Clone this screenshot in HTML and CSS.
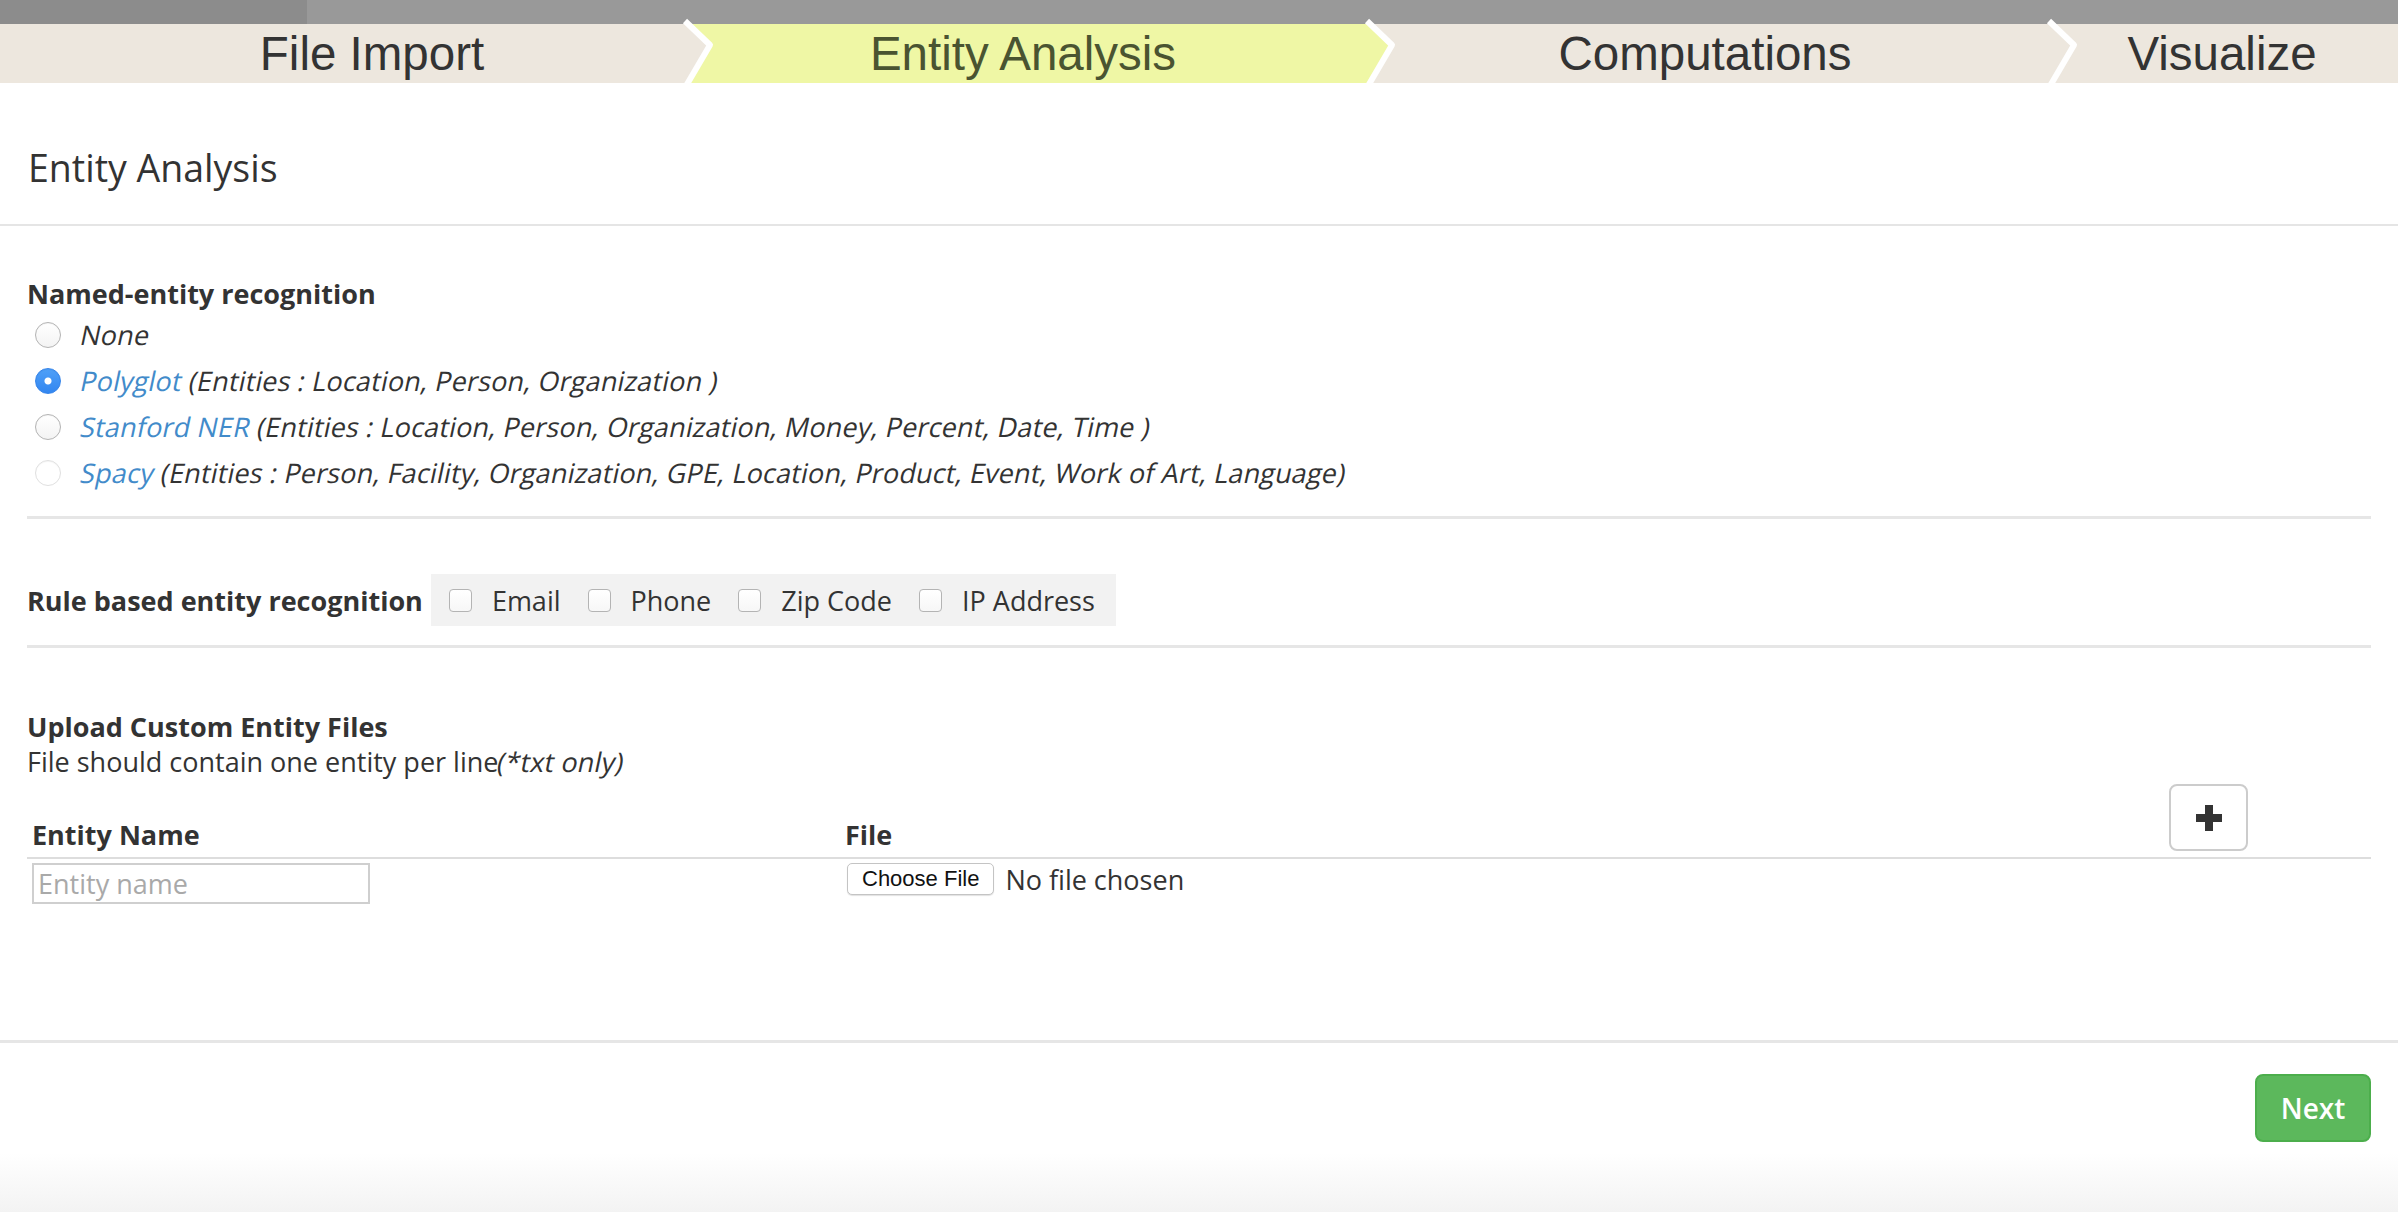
FILE: index.html
```html
<!DOCTYPE html>
<html lang="en">
<head>
<meta charset="utf-8">
<title>Entity Analysis</title>
<link rel="stylesheet" href="styles.css">
</head>
<body>
<div class="progress"><div class="progress-fill"></div></div>
<nav class="steps">
  <div class="step step-first">
    <span>File Import</span>
    <svg class="chev" width="40" height="59" viewBox="0 0 40 59"><polygon class="chev-fill-beige" points="0,0 7,0 32,21 8,59 0,59"/><polyline points="7,-3 32,21 8,62" fill="none" stroke="#fff" stroke-width="6" stroke-linejoin="round"/></svg>
  </div>
  <div class="step step-active">
    <span>Entity Analysis</span>
    <svg class="chev" width="40" height="59" viewBox="0 0 40 59"><polygon class="chev-fill-yellow" points="0,0 7,0 32,21 8,59 0,59"/><polyline points="7,-3 32,21 8,62" fill="none" stroke="#fff" stroke-width="6" stroke-linejoin="round"/></svg>
  </div>
  <div class="step">
    <span>Computations</span>
    <svg class="chev" width="40" height="59" viewBox="0 0 40 59"><polygon class="chev-fill-beige" points="0,0 7,0 32,21 8,59 0,59"/><polyline points="7,-3 32,21 8,62" fill="none" stroke="#fff" stroke-width="6" stroke-linejoin="round"/></svg>
  </div>
  <div class="step step-last">
    <span>Visualize</span>
  </div>
</nav>

<header class="page-title"><h1>Entity Analysis</h1></header>

<main class="panel-body">
  <section class="ner">
    <div class="group-label">Named-entity recognition</div>
    <label class="radio-row"><input type="radio" name="ner"><em class="obl">None</em></label>
    <label class="radio-row"><input type="radio" name="ner" checked><em class="obl"><a class="lnk">Polyglot</a> (Entities : Location, Person, Organization )</em></label>
    <label class="radio-row"><input type="radio" name="ner"><em class="obl"><a class="lnk">Stanford NER</a> (Entities : Location, Person, Organization, Money, Percent, Date, Time )</em></label>
    <label class="radio-row"><input type="radio" name="ner" disabled><em class="obl"><a class="lnk">Spacy</a> (Entities : Person, Facility, Organization, GPE, Location, Product, Event, Work of Art, Language)</em></label>
  </section>

  <hr class="divider">

  <section class="rule-row">
    <div class="rule-label">Rule based entity recognition</div>
    <div class="rule-box">
      <label class="check"><input type="checkbox"><span>Email</span></label>
      <label class="check"><input type="checkbox"><span>Phone</span></label>
      <label class="check"><input type="checkbox"><span>Zip Code</span></label>
      <label class="check"><input type="checkbox"><span>IP Address</span></label>
    </div>
  </section>

  <hr class="divider divider-2">

  <section class="upload">
    <div class="upload-title">Upload Custom Entity Files</div>
    <div class="upload-desc">File should contain one entity per line<em class="obl">(*txt only)</em></div>

    <div class="tbl">
      <div class="tbl-head">
        <div class="th">Entity Name</div>
        <div class="th">File</div>
        <div class="th th-add">
          <button class="btn-add" type="button" aria-label="Add">
            <svg width="26" height="26" viewBox="0 0 26 26"><path d="M9 0h8v9h9v8h-9v9H9v-9H0V9h9z" fill="#333"/></svg>
          </button>
        </div>
      </div>
      <div class="tbl-row">
        <div class="td"><input class="name-input" type="text" placeholder="Entity name"></div>
        <div class="td td-file"><button class="file-btn" type="button">Choose File</button><span class="file-none">No file chosen</span></div>
        <div class="td"></div>
      </div>
    </div>
  </section>
</main>

<footer class="panel-footer">
  <button class="btn-next" type="button">Next</button>
</footer>
</body>
</html>
```

FILE: styles.css
```css
* { box-sizing: border-box; }

body {
  margin: 0;
  font-family: "Open Sans", "Noto Sans", sans-serif;
  font-size: 27px;
  color: #333;
  background: #fff;
}

/* top progress bar */
.progress {
  height: 24px;
  background: #999999;
}
.progress-fill {
  width: 307px;
  height: 100%;
  background: #8c8c8c;
}

/* wizard steps */
.steps {
  display: flex;
  height: 59px;
  background: #ede7de;
}
.step {
  position: relative;
  flex: none;
  width: 682px;
  display: flex;
  align-items: center;
  justify-content: center;
  font-family: "Liberation Sans", Arial, sans-serif;
  font-size: 47.5px;
  line-height: 59px;
  color: #333;
  background: #ede7de;
}
.step-first { padding-left: 62px; }
.step-active {
  background: #eff7a5;
  color: #4a5431;
}
.step-last {
  flex: 1;
  width: auto;
}
.chev {
  position: absolute;
  top: 0;
  left: calc(100% - 4px);
  z-index: 2;
  overflow: visible;
}
.chev-fill-beige { fill: #ede7de; }
.chev-fill-yellow { fill: #eff7a5; }

/* title */
.page-title {
  padding: 60px 28px 31px;
  border-bottom: 2px solid #e5e5e5;
}
.page-title h1 {
  margin: 0;
  font-size: 37.5px;
  font-weight: 400;
  line-height: 50px;
}

/* slanted (synthetic oblique) text, as in the original rendering */
.obl {
  display: inline-block;
  font-style: normal;
  letter-spacing: 0.15px;
  transform: skewX(-12deg);
}

/* body */
.panel-body {
  padding: 49px 27px 136px;
}
.group-label {
  font-weight: 700;
  line-height: 37px;
}
.radio-row {
  display: flex;
  align-items: center;
  gap: 20px;
  height: 46px;
  padding-left: 8px;
  line-height: 34px;
  white-space: nowrap;
}
.lnk { color: #428bca; text-decoration: none; }

.radio-row input {
  -webkit-appearance: none;
  appearance: none;
  flex: none;
  width: 26px;
  height: 26px;
  margin: 0;
  border-radius: 50%;
  border: 1px solid #b3b3b3;
  background: linear-gradient(#ffffff, #f3f3f3);
  box-shadow: inset 0 1px 1px rgba(0,0,0,0.04);
}
.radio-row input:checked {
  border-color: #3584ea;
  background:
    radial-gradient(circle, #fff 0, #fff 3px, rgba(255,255,255,0) 4px),
    linear-gradient(#4fa0f8, #3286f0);
}
.radio-row input:disabled {
  border-color: #e0e0e0;
  background: #fff;
}

.divider {
  margin: 20px 0 0;
  border: 0;
  height: 3px;
  background: #e6e6e6;
}
.divider-2 { margin-top: 19px; }

/* rule based row */
.rule-row {
  display: flex;
  align-items: center;
  margin-top: 55px;
  height: 52px;
}
.rule-label {
  font-weight: 700;
  white-space: nowrap;
}
.rule-box {
  display: flex;
  align-items: center;
  height: 52px;
  margin-left: 8px;
  padding: 0 21px 0 18px;
  background: #f2f2f2;
  gap: 27px;
}
.check {
  display: flex;
  align-items: center;
  gap: 20px;
  white-space: nowrap;
}
.check input {
  -webkit-appearance: none;
  appearance: none;
  flex: none;
  width: 23px;
  height: 23px;
  margin: 0;
  border: 1px solid #b4b4b4;
  border-radius: 4px;
  background: linear-gradient(#ffffff, #f7f7f7);
}

/* upload */
.upload {
  padding-top: 61px;
}
.upload-title {
  font-weight: 700;
  line-height: 35px;
}
.upload-desc {
  line-height: 35px;
}

.tbl {
  margin-top: 5px;
}
.tbl-head,
.tbl-row {
  display: grid;
  grid-template-columns: 813px 1320px 1fr;
}
.tbl-head {
  align-items: end;
  border-bottom: 2px solid #dddddd;
}
.th {
  padding: 0 5px 5px;
  font-weight: 700;
  line-height: 35px;
}
.th-add {
  padding: 0 0 6px 9px;
  line-height: 0;
}
.btn-add {
  display: grid;
  place-items: center;
  width: 79px;
  height: 67px;
  padding: 0;
  border: 2px solid #cccccc;
  border-radius: 8px;
  background: #fff;
}

.tbl-row {
  align-items: start;
  padding-top: 4px;
}
.td { padding: 0 5px; }
.name-input {
  display: block;
  width: 338px;
  height: 41px;
  padding: 0 4px;
  border: 2px solid #cfcfcf;
  font-family: "Open Sans", "Noto Sans", sans-serif;
  font-size: 27px;
  color: #333;
  outline: none;
}
.name-input::placeholder { color: #a9a9a9; }

.td-file {
  display: flex;
  align-items: center;
  padding-left: 7px;
  height: 32px;
}
.file-btn {
  height: 32px;
  padding: 0 14px;
  border: 1px solid #c4c4c4;
  border-radius: 5px;
  background: #fff;
  box-shadow: 0 1px 1px rgba(0,0,0,0.12);
  font-family: "Liberation Sans", Arial, sans-serif;
  font-size: 22px;
  color: #111;
}
.file-none {
  margin-left: 11px;
  white-space: nowrap;
}

/* footer */
.panel-footer {
  display: flex;
  justify-content: flex-end;
  padding: 31px 27px 70px;
  border-top: 3px solid #e6e6e6;
  background: linear-gradient(#ffffff 0, #ffffff 65%, #f3f3f3 100%);
}
.btn-next {
  width: 116px;
  height: 68px;
  padding: 0;
  border: 2px solid #4cae4c;
  border-radius: 8px;
  background: #5cb85c;
  color: #fff;
  font-family: "Open Sans", "Noto Sans", sans-serif;
  font-size: 28px;
  font-weight: 600;
}
```
